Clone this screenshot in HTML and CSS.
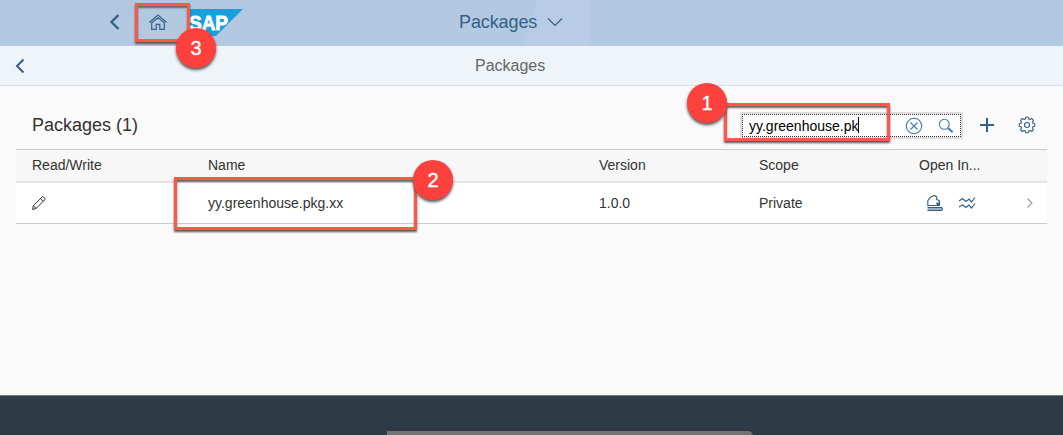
FILE: index.html
```html
<!DOCTYPE html>
<html lang="en">
<head>
<meta charset="utf-8">
<title>Packages</title>
<link rel="stylesheet" href="styles.css">
</head>
<body>
<div class="app">
  <header class="shell">
    <svg class="shell-facet" width="120" height="46"><path d="M17 0H70V46H4Z"/></svg>
    <div class="shell-left">
      <svg class="icon back" width="12" height="18" viewBox="0 0 12 18"><path d="M9.500 2 2.500 9l7 7" stroke-width="2.400"/></svg>
      <svg class="icon home" width="20" height="18" viewBox="0 0 20 18"><path d="M1.300 9.500 10 2l8.700 7.500M3.700 9.700v6.600h4.500v-5h3.600v5h4.500V9.700L10 4.700Z" stroke-width="1.200"/></svg>
      <svg class="logo" width="54" height="28" viewBox="0 0 54 28"><path d="M0 0H54L27 27H0Z" fill="#199fdb"/><text x="0" y="20.500" textLength="39" lengthAdjust="spacingAndGlyphs">SAP</text></svg>
    </div>
    <div class="shell-title"><span>Packages</span>
      <svg class="icon" width="16" height="10" viewBox="0 0 16 10"><path d="m1 1.500 7 7 7-7" stroke-width="1.200"/></svg>
    </div>
  </header>
  <div class="page-bar">
    <svg class="icon page-back" width="12" height="16" viewBox="0 0 12 16"><path d="M8.500 1.500 2 8l6.500 6.500" stroke-width="2"/></svg>
    <h1>Packages</h1>
  </div>
  <main>
    <div class="toolbar">
      <h2>Packages (1)</h2>
      <div class="search">
        <div class="field">
          <span class="query">yy.greenhouse.pk</span><i class="caret"></i>
          <svg class="icon clear" width="18" height="18" viewBox="0 0 18 18"><circle cx="9" cy="9" r="7.700"/><path d="m5.500 5.500 7 7m0-7-7 7"/></svg>
          <svg class="icon find" width="16" height="16" viewBox="0 0 16 16"><circle cx="6.300" cy="6.300" r="5"/><path d="m10 10 4.600 4.300" stroke-width="2"/></svg>
        </div>
      </div>
      <svg class="icon add" width="16" height="16" viewBox="0 0 16 16"><path d="M8 1v14M1 8h14" stroke-width="2"/></svg>
      <svg class="icon gear" width="18" height="18" viewBox="0 0 18 18"><path d="M7.300 3 7.700 1.300h2.600l.4 1.700 1.300.5 1.700-1 1.800 1.800-1 1.700.5 1.300 1.700.4v2.600l-1.700.4-.5 1.300 1 1.700-1.800 1.800-1.700-1-1.300.5-.4 1.700H7.700L7.300 15 6 14.500l-1.700 1-1.800-1.800 1-1.700-.5-1.300-1.700-.4V7.700L3 7.300 3.500 6l-1-1.700 1.800-1.800 1.700 1Z" stroke-linejoin="round"/><circle cx="9" cy="9" r="2.500"/></svg>
    </div>
    <div class="table">
      <div class="row head"><span>Read/Write</span><span>Name</span><span>Version</span><span>Scope</span><span>Open In...</span></div>
      <div class="row item">
        <span><svg class="icon pencil" width="16" height="16" viewBox="0 0 16 16"><path d="m1.500 14.500.9-3.800L11 2.100q.8-.8 1.600 0l1.100 1.100q.8.8 0 1.600L5.200 13.400ZM2.400 10.700l2.800 2.700M9.500 3.600l2.700 2.700"/></svg></span>
        <span>yy.greenhouse.pkg.xx</span><span>1.0.0</span><span>Private</span>
        <span class="actions">
          <svg class="icon" width="18" height="18" viewBox="0 0 18 18"><path d="M4 11.500H1.800V6.700L4.300 3.300l4.300-1.800 2.200 1.600-.3 2.200 3 1.700v3.500M4 11.500h6.500M1.500 13.500h14q2 1.500 0 3h-14M1.500 15h14"/><path d="M11 9h2.500v2.500H11z" fill="#346187"/></svg>
          <svg class="icon" width="18" height="14" viewBox="0 0 18 14"><path d="m1 5 3.500-2.500L8 5.500 11 3l2.500 3L17 1.500M1 11l3.500-2L8 11.500 11 9l2.500 3L17 7.500" stroke-width="1.200"/></svg>
          <svg class="icon next" width="8" height="12" viewBox="0 0 8 12"><path d="m1.500 1.500 4.500 4.500-4.500 4.500"/></svg>
        </span>
      </div>
    </div>
  </main>
  <footer><div class="dock"></div></footer>
  <div class="mark mark-home"></div><b class="badge badge-home">3</b>
  <div class="mark mark-search"></div><b class="badge badge-search">1</b>
  <div class="mark mark-name"></div><b class="badge badge-name">2</b>
</div>
</body>
</html>
```
FILE: styles.css
```css
* { box-sizing: border-box; }
body { margin: 0; font-family: "Liberation Sans", Arial, sans-serif; color: #333; }
.app { position: relative; width: 1063px; height: 435px; overflow: hidden; display: flex; flex-direction: column; background: #fafafa; }
svg { display: block; flex: none; }
.icon { fill: none; stroke: #346187; stroke-width: 1.1; }
.shell { position: relative; height: 46px; display: flex; background: linear-gradient(#b2c8e0, #b4cae3); }
.shell-facet { position: absolute; left: 520px; top: 0; fill: #b8cde5; }
.shell-left { width: 459px; padding-left: 109px; display: flex; }
.back { margin-top: 13px; }
.home { margin: 13px 0 0 27px; }
.logo { margin: 9px 0 0 21px; }
.logo text { font: bold 21px "Liberation Sans", Arial, sans-serif; fill: #fff; stroke: #fff; stroke-width: .8; }
.shell-title { position: relative; display: flex; align-items: center; gap: 10px; height: 44px; font-size: 18px; letter-spacing: -.1px; color: #346187; }
.page-bar { height: 40px; display: flex; align-items: center; background: #eff4f9; border-bottom: 1px solid #d5e1ee; }
.page-back { margin: 1px 0 0 15px; }
h1, h2 { margin: 0; font-weight: normal; }
h1 { margin-left: 448px; font-size: 16px; color: #666; }
main { height: 309px; padding: 0 16px; }
.toolbar { height: 63px; padding: 15px 0 0 16px; display: flex; align-items: center; }
h2 { width: 708px; font-size: 18px; }
.search { width: 223px; height: 27px; border: 2px solid #ddd; background: #fff; }
.field { height: 23px; border: 1px dotted #333; display: flex; align-items: center; padding-left: 6px; }
.query { font-size: 14px; padding-top: 1px; color: #000; }
.caret { width: 1px; height: 16px; background: #000; }
.clear { margin: 1px 0 0 46px; stroke: #427cac; }
.find { margin: 1px 0 0 15px; stroke: #427cac; }
.add { margin-left: 16px; }
.gear { margin-left: 23px; }
.table { font-size: 14px; }
.row { display: grid; grid-template-columns: 176px 391px 160px 160px 1fr; align-items: center; padding-left: 16px; }
.head { height: 34px; padding-bottom: 1px; background: #f7f7f7; border-top: 1px solid #ccc; border-bottom: 2px solid #e5e5e5; }
.item { height: 41px; background: #fff; border-bottom: 1px solid #ccc; }
.pencil { stroke: #333; stroke-width: 1; margin-left: -1px; }
.actions { display: flex; align-items: center; padding-left: 7px; gap: 14px; }
.next { margin-left: 36px; stroke: #999; }
footer { height: 40px; padding: 35px 0 0 387px; background: linear-gradient(#303d48, #2d3945); border-top: 1px solid #70808c; }
.dock { width: 366px; height: 5px; background: #737373; border-radius: 0 5px 0 0; }
.mark { position: absolute; border: 3px solid #fb584b; box-shadow: 0 2px 2px #555, inset 0 2px 2px #666; }
.mark-home { left: 135px; top: 3px; width: 55px; height: 39px; }
.mark-search { left: 724px; top: 103px; width: 166px; height: 38px; }
.mark-name { left: 174px; top: 177px; width: 243px; height: 53px; }
.badge { position: absolute; width: 40px; height: 40px; border-radius: 50%; background: #fe413d; color: #fff; font-size: 20px; font-weight: normal; -webkit-text-stroke: .4px #fff; line-height: 41px; text-align: center; box-shadow: 0 2px 3px #555; }
.badge-home { left: 176px; top: 28px; }
.badge-search { left: 687px; top: 83px; }
.badge-name { left: 413px; top: 160px; }
```
